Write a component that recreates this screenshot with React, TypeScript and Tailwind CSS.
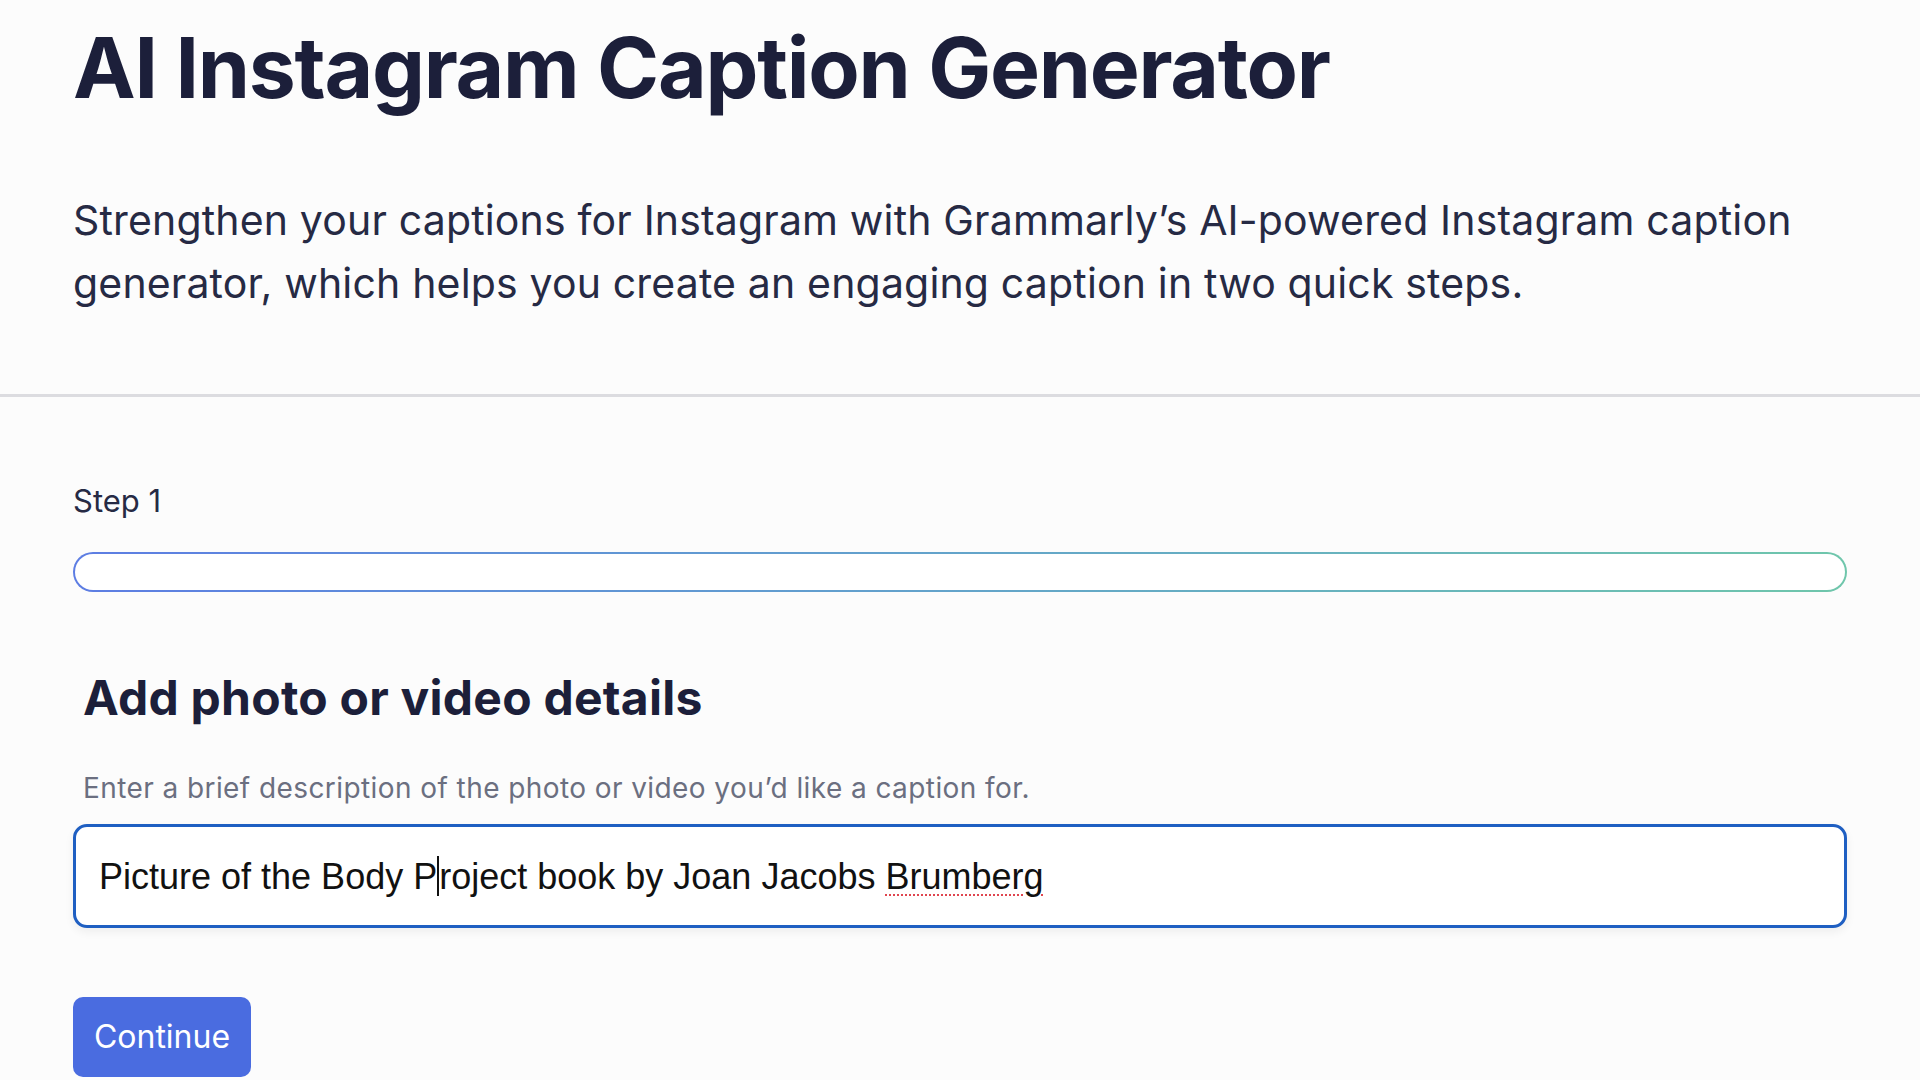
export default function App() {
  return (
    <div className="w-full overflow-hidden bg-[#fcfcfc]" style={{ height: 1080 }}>
      <div className="px-[73px] pt-[18px] pb-[79px]">
        <h1 className="text-[84px] leading-[100px] font-bold tracking-[-0.015em] text-[#1c1f3a] font-['Inter',sans-serif]">
          AI Instagram Caption Generator
        </h1>
        <p className="mt-[71px] text-[41px] leading-[63px] tracking-[0.004em] text-[#262a44] font-['Inter',sans-serif]">
          Strengthen your captions for Instagram with Grammarly’s AI-powered Instagram caption
          <br />
          generator, which helps you create an engaging caption in two quick steps.
        </p>
      </div>
      <div className="h-[3px] w-full bg-[#dcdce0]" />
      <div className="px-[73px] pt-[86px]">
        <div className="text-[31px] leading-[36px] text-[#262a44] font-['Inter',sans-serif]">Step 1</div>
        <div className="mt-[33px] h-[40px] rounded-full bg-gradient-to-r from-[#5d7de3] to-[#6fc6ab] p-[2px]">
          <div className="h-full w-full rounded-full bg-white" />
        </div>
        <div className="pl-[10px] pt-[78px]">
          <h2 className="text-[48px] leading-[56px] font-bold tracking-[0.005em] text-[#1c1f3a] font-['Inter',sans-serif]">
            Add photo or video details
          </h2>
          <p className="mt-[46px] text-[28px] leading-[32px] tracking-[0.015em] text-[#6b6f80] font-['Inter',sans-serif]">
            Enter a brief description of the photo or video you’d like a caption for.
          </p>
        </div>
        <div className="mt-[20px] flex h-[104px] items-center rounded-[14px] border-[3px] border-[#1f5fc2] bg-white pl-[23px] shadow-[0_4px_10px_rgba(0,0,0,0.06)]">
          <span className="text-[36px] text-[#111] font-['Liberation_Sans',Arial,sans-serif]">
            Picture of the Body P
            <span className="inline-block h-[40px] w-[2px] translate-y-[7px] bg-[#111] align-baseline" />
            roject book by Joan Jacobs{" "}
            <span className="underline decoration-dotted decoration-[#e0454f] decoration-2 underline-offset-[6px]">
              Brumberg
            </span>
          </span>
        </div>
        <button className="mt-[69px] h-[80px] w-[178px] rounded-[10px] bg-[#4a6ce0] text-[32px] text-white font-['Inter',sans-serif]">
          Continue
        </button>
      </div>
    </div>
  );
}
